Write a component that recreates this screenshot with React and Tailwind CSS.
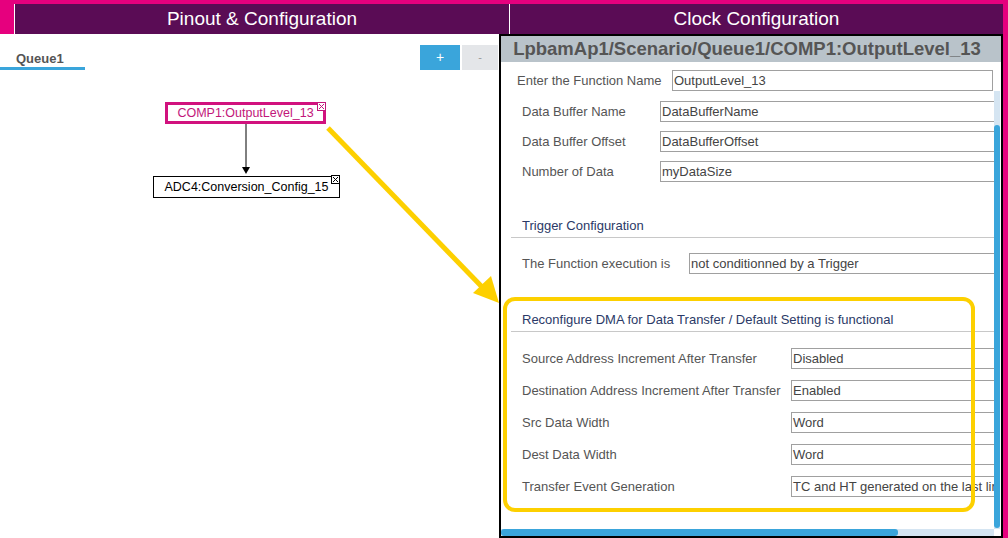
import React from "react";

const font = { fontFamily: '"Liberation Sans", Arial, sans-serif' };

const Field = ({ label, value, labelW }) => (
  <div className="flex items-center h-[21px]">
    <div className={`${labelW} shrink-0 text-[13px] leading-[15px] text-[#555] whitespace-nowrap`}>{label}</div>
    <div className="w-[360px] shrink-0 h-[21px] border border-[#a0a0a0] bg-white px-[1px] text-[13px] leading-[19px] text-[#444] whitespace-nowrap overflow-hidden">
      {value}
    </div>
  </div>
);

const SectionTitle = ({ children }) => (
  <div className="ml-[-11px] pl-[11px] border-b border-[#c8c8c8] pb-[4px] text-[13px] leading-[15px] text-[#2b3a67] whitespace-nowrap">
    {children}
  </div>
);

const CloseBox = ({ color }) => (
  <svg width="9" height="9" viewBox="0 0 9 9" className="block">
    <rect x="0.5" y="0.5" width="8" height="8" fill="white" stroke={color} />
    <path d="M2 2 L7 7 M7 2 L2 7" stroke={color} strokeWidth="1" />
  </svg>
);

// queue diagram on the left canvas
const QueueCanvas = () => (
  <div className="relative w-[499px] h-full">
    <div className="flex items-start justify-between pt-[11px]">
      <div className="w-[85px] mt-[7px] border-b-[3px] border-[#3aa5db] pb-[1px] pl-[16px] text-[13px] leading-[14px] font-bold text-[#555]">
        Queue1
      </div>
      <div className="flex gap-[2px] mr-[1px]">
        <div className="w-[40px] h-[25px] bg-[#3aa5db] text-white text-[14px] flex items-center justify-center">+</div>
        <div className="w-[36px] h-[25px] bg-[#e4e6e9] text-[#999] text-[11px] flex items-center justify-center">-</div>
      </div>
    </div>

    <div className="absolute left-[165px] top-[68px] w-[161px] h-[22px] border-[3px] border-[#d1127e] flex items-center justify-center text-[12.5px] text-[#c2167a]">
      COMP1:OutputLevel_13
    </div>
    <div className="absolute left-[317px] top-[68px]">
      <CloseBox color="#c2167a" />
    </div>

    <svg className="absolute left-[240px] top-[90px]" width="12" height="52" viewBox="0 0 12 52">
      <line x1="6" y1="0" x2="6" y2="46" stroke="black" strokeWidth="1" />
      <path d="M2 43 L10 43 L6 50 Z" fill="black" />
    </svg>

    <div className="absolute left-[153px] top-[142px] w-[187px] h-[22px] border border-black flex items-center justify-center text-[12.5px] text-black">
      ADC4:Conversion_Config_15
    </div>
    <div className="absolute left-[331px] top-[141px]">
      <CloseBox color="black" />
    </div>
  </div>
);

const ConfigPanel = () => (
  <div className="w-[504px] h-full border-2 border-black flex flex-col bg-white">
    <div className="h-[26px] shrink-0 bg-[#b9c3ca] flex items-center justify-center pr-[8px] text-[18.5px] font-bold text-[#555] whitespace-nowrap">
      LpbamAp1/Scenario/Queue1/COMP1:OutputLevel_13
    </div>
    <div className="h-[29px] shrink-0 flex items-start pt-[8px] pl-[16px] pr-[8px]">
      <div className="w-[155px] shrink-0 h-[21px] flex items-center text-[13px] text-[#555] whitespace-nowrap">
        Enter the Function Name
      </div>
      <div className="flex-1 h-[21px] border border-[#a0a0a0] px-[1px] text-[13px] leading-[19px] text-[#444]">
        OutputLevel_13
      </div>
    </div>

    <div className="flex-1 flex min-h-0">
      <div className="flex-1 overflow-hidden pl-[21px] pt-[10px] flex flex-col">
        <div className="flex flex-col gap-[9px]">
          <Field label="Data Buffer Name" value="DataBufferName" labelW="w-[138px]" />
          <Field label="Data Buffer Offset" value="DataBufferOffset" labelW="w-[138px]" />
          <Field label="Number of Data" value="myDataSize" labelW="w-[138px]" />
        </div>

        <div className="mt-[36px]">
          <SectionTitle>Trigger Configuration</SectionTitle>
        </div>
        <div className="mt-[15px]">
          <Field label="The Function execution is" value="not conditionned by a Trigger" labelW="w-[167px]" />
        </div>

        <div className="mt-[38px]">
          <SectionTitle>Reconfigure DMA for Data Transfer / Default Setting is functional</SectionTitle>
        </div>
        <div className="mt-[16px] flex flex-col gap-[11px]">
          <Field label="Source Address Increment After Transfer" value="Disabled" labelW="w-[269px]" />
          <Field label="Destination Address Increment After Transfer" value="Enabled" labelW="w-[269px]" />
          <Field label="Src Data Width" value="Word" labelW="w-[269px]" />
          <Field label="Dest Data Width" value="Word" labelW="w-[269px]" />
          <Field label="Transfer Event Generation" value="TC and HT generated on the last linked-list item" labelW="w-[269px]" />
        </div>
      </div>
      {/* vertical scrollbar */}
      <div className="w-[6px] shrink-0 bg-[#d5e5f2] pt-[34px] pb-[1px] mr-[1px]">
        <div className="h-full bg-[#3aa5db] rounded-[3px]" />
      </div>
    </div>

    {/* horizontal scrollbar */}
    <div className="h-[7px] shrink-0 flex">
      <div className="w-[493px] bg-[#d5e5f2]">
        <div className="w-[397px] h-full bg-[#3aa5db] rounded-[3px]" />
      </div>
    </div>
  </div>
);

export default function App() {
  return (
    <div className="relative w-[1008px] h-[538px] overflow-hidden bg-white flex" style={font}>
      <div className="w-[1003px] flex flex-col">
        <div className="h-[34px] shrink-0 bg-[#e6007e] pt-[4px] flex">
          <div className="w-[14px] shrink-0" />
          <div className="w-[1px] shrink-0 bg-white" />
          <div className="w-[494px] shrink-0 bg-[#5a0c55] flex items-center justify-center text-[19px] text-white">
            Pinout &amp; Configuration
          </div>
          <div className="w-[1px] shrink-0 bg-white" />
          <div className="flex-1 bg-[#5a0c55] flex items-center justify-center text-[19px] text-white">
            Clock Configuration
          </div>
        </div>
        <div className="flex-1 flex min-h-0">
          <QueueCanvas />
          <ConfigPanel />
        </div>
      </div>
      <div className="w-[5px] shrink-0 bg-[#e6007e]" />

      {/* highlight annotation */}
      <svg className="absolute left-0 top-0 pointer-events-none" width="1008" height="538" viewBox="0 0 1008 538">
        <line x1="328" y1="128" x2="485" y2="290" stroke="#fdd000" strokeWidth="5" />
        <path d="M473 293 L491 276 L499 303 Z" fill="#fdd000" />
        <rect x="505" y="299" width="468" height="211" rx="10" fill="none" stroke="#fdd000" strokeWidth="4" />
      </svg>
    </div>
  );
}
